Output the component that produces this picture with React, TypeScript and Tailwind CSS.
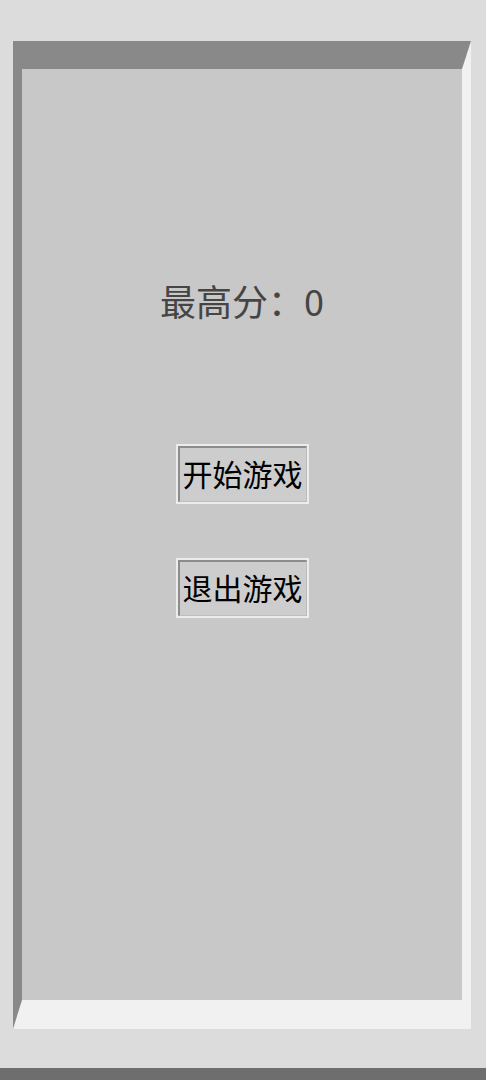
import React from 'react';

const font = { fontFamily: '"Noto Sans CJK SC", "Noto Sans", sans-serif' };

const MenuButton = ({ label }: { label: string }) => (
  <button className="w-[133px] h-[60px] border-2 border-[#ececec] bg-[#cdcdcd] p-0">
    <span className="flex items-center justify-center w-full h-full pb-[4px] border-t-2 border-l-2 border-b border-r border-t-[#8c8c8c] border-l-[#8c8c8c] border-b-[#bdbdbd] border-r-[#bdbdbd] text-[30px] leading-none text-black">
      {label}
    </span>
  </button>
);

const App = () => {
  return (
    <div className="w-[486px] h-[1080px] flex flex-col bg-[#dcdcdc]" style={font}>
      <div className="mt-[41px] ml-[13px] mr-[15px] h-[988px] flex flex-col items-center border-t-[28px] border-b-[29px] border-l-[9px] border-r-[9px] border-t-[#898989] border-l-[#898989] border-b-[#f1f1f1] border-r-[#f1f1f1] bg-[#c8c8c8]">
        <div className="pt-[211px] text-[36px] leading-[40px] text-[#454545]">最高分：0</div>
        <div className="mt-[124px] flex flex-col items-center gap-[54px]">
          <MenuButton label="开始游戏" />
          <MenuButton label="退出游戏" />
        </div>
      </div>
      <div className="flex-1" />
      <div className="h-[12px] bg-[#6e6e6e]" />
    </div>
  );
};

export default App;
